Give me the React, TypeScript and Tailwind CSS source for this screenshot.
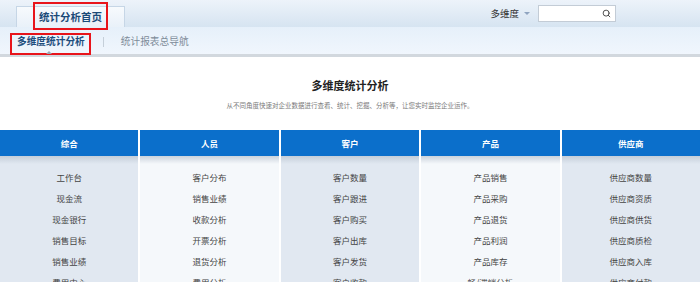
import { Search } from 'lucide-react';

const columns = [
  { title: '综合', items: ['工作台', '现金流', '现金银行', '销售目标', '销售业绩', '费用中心'] },
  { title: '人员', items: ['客户分布', '销售业绩', '收款分析', '开票分析', '退货分析', '费用分析'] },
  { title: '客户', items: ['客户数量', '客户跟进', '客户购买', '客户出库', '客户发货', '客户收款'] },
  { title: '产品', items: ['产品销售', '产品采购', '产品退货', '产品利润', '产品库存', '畅/滞销分析'] },
  { title: '供应商', items: ['供应商数量', '供应商资质', '供应商供货', '供应商质检', '供应商入库', '供应商付款'] },
];

export default function App() {
  return (
    <div
      className="w-[700px] h-[282px] overflow-hidden bg-white"
      style={{ fontFamily: '"Noto Sans CJK SC", "Noto Sans", sans-serif' }}
    >
      {/* Top bar */}
      <div className="h-[27px] flex items-end justify-between bg-gradient-to-b from-[#edf3fa] to-[#d6e4f1]">
        <div className="relative ml-[16px] w-[109px] h-[21px] flex items-center justify-center bg-gradient-to-b from-[#f7fafd] to-[#e9f1f9] border border-b-0 border-[#c6d6e6]">
          <span className="text-[10.5px] font-bold text-[#1b4a78] leading-none">统计分析首页</span>
          <div className="absolute left-[16px] top-[-5px] w-[75px] h-[28px] border-2 border-[#e8141b]" />
        </div>
        <div className="self-center flex items-center mr-[84px]">
          <span className="text-[9.5px] text-[#333] leading-none">多维度</span>
          <span className="ml-[5px] mr-[8px] w-0 h-0 border-x-[3px] border-x-transparent border-t-[3px] border-t-[#8fa4c0]" />
          <div className="w-[78px] h-[17px] bg-white border border-[#c3ccd6] flex items-center justify-end pr-[4px]">
            <Search className="w-[9px] h-[9px] text-[#444]" strokeWidth={2.5} />
          </div>
        </div>
      </div>

      {/* Sub nav */}
      <div className="h-[27px] flex items-center pt-[2px] pl-[17px] bg-gradient-to-b from-[#e6f0fa] to-[#f0f6fd]">
        <div className="relative h-[10px] flex items-center">
          <span className="text-[9.7px] font-bold text-[#1d4d7c] leading-none">多维度统计分析</span>
          <div className="absolute left-[-7px] top-[-3.5px] w-[81px] h-[22px] border-2 border-[#e8141b]" />
          <span className="absolute left-[29px] top-[14px] w-0 h-0 border-x-[3px] border-x-transparent border-b-[3px] border-b-[#9aa7b4]" />
        </div>
        <span className="ml-[18px] w-px h-[10px] bg-[#c5cfd9]" />
        <span className="ml-[17px] text-[9.7px] text-[#7d8b99] leading-none">统计报表总导航</span>
      </div>
      <div className="h-[3px] bg-[#d2d8de]" />

      {/* Heading */}
      <div className="flex flex-col items-center pt-[20px]">
        <div className="text-[11px] leading-[16px] font-bold text-[#222]">多维度统计分析</div>
        <div className="mt-[7px] text-[6.5px] leading-[10px] text-[#7a7a7a]">
          从不同角度快速对企业数据进行查看、统计、挖掘、分析等，让您实时监控企业运作。
        </div>
      </div>

      {/* Columns */}
      <div className="mt-[20px] grid grid-cols-5 gap-[2px]">
        {columns.map((col, i) => (
          <div key={col.title} className={i % 2 === 0 ? 'bg-[#e1e8f1]' : 'bg-[#f5f8fb]'}>
            <div className="relative h-[26px] bg-[#0b6fcb] flex items-center justify-center">
              <span className="text-[8.5px] font-bold text-white leading-none">{col.title}</span>
              <div className="absolute left-0 right-0 top-full h-[8px] bg-gradient-to-b from-[#b9c3cf]/70 to-transparent" />
            </div>
            <div className="pt-[11px] flex flex-col items-center">
              {col.items.map(item => (
                <div key={item} className="h-[21px] flex items-center text-[8.5px] text-[#444]">
                  {item}
                </div>
              ))}
            </div>
          </div>
        ))}
      </div>
    </div>
  );
}
